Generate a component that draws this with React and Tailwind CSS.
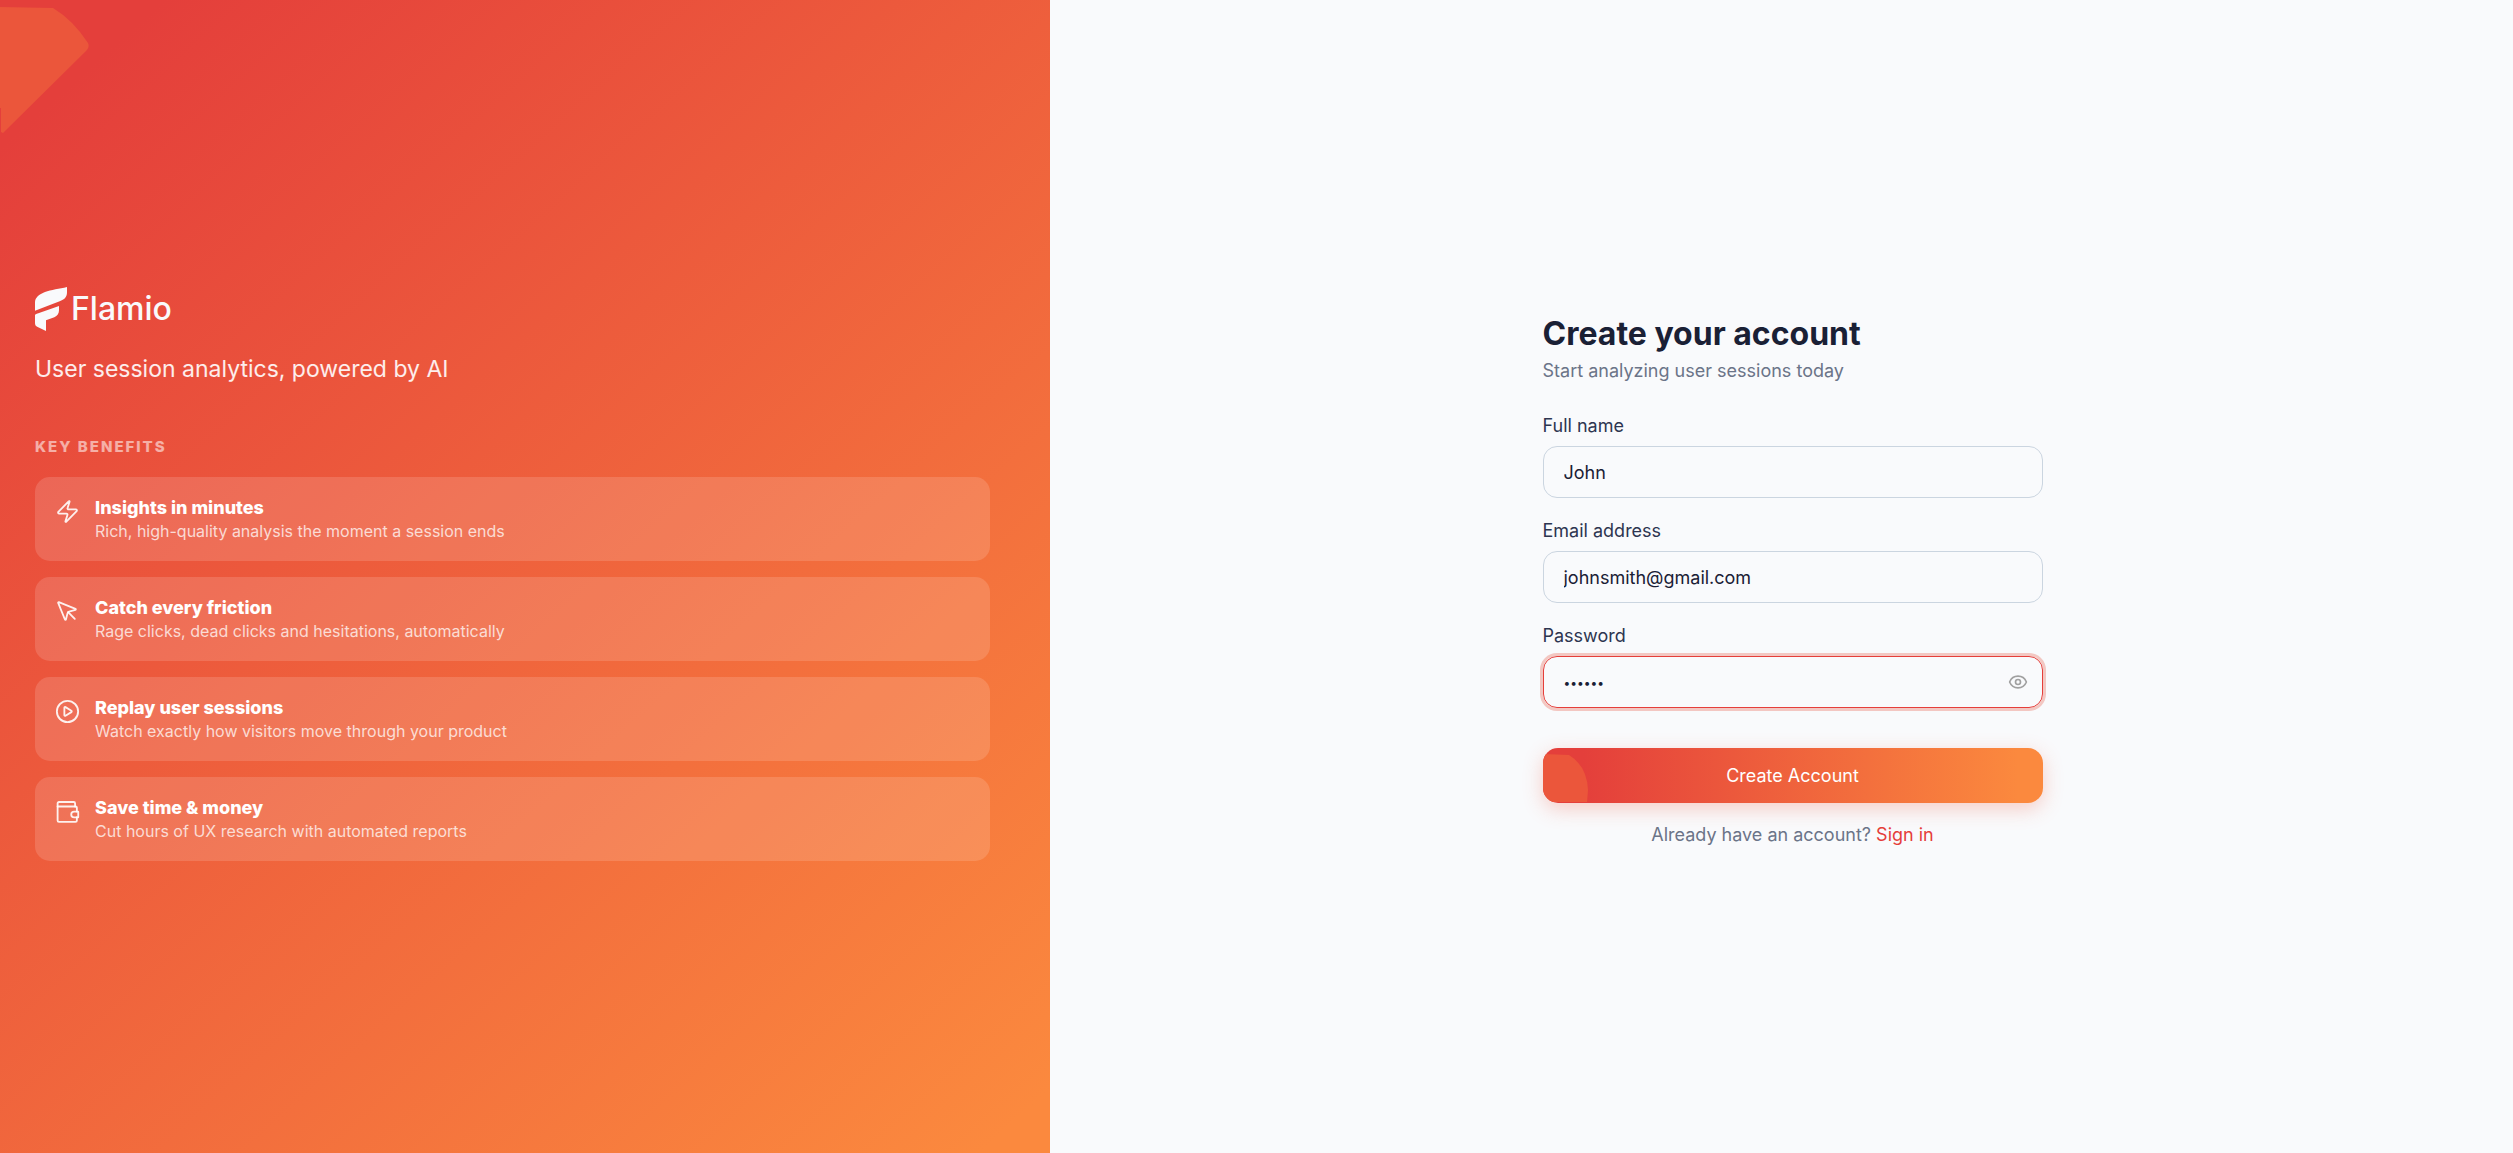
import React, { useState } from 'react'
import { Zap, MousePointer, Eye } from 'lucide-react'

const PlayIcon = ({ className }) => (
  <svg className={className} viewBox="0 0 24 24" fill="none" stroke="currentColor" strokeWidth="1.75" strokeLinejoin="round" aria-hidden="true">
    <circle cx="12" cy="12" r="10.2" />
    <path d="M9 8.4c0-.6.6-.9 1.1-.6l5.6 3.5c.5.3.5 1 0 1.3l-5.6 3.5c-.5.3-1.1 0-1.1-.6z" />
  </svg>
)

const WalletIcon = ({ className }) => (
  <svg className={className} viewBox="0 0 24 24" fill="none" stroke="currentColor" strokeWidth="1.75" strokeLinecap="round" strokeLinejoin="round" aria-hidden="true">
    <path d="M21 12V8.5a1.3 1.3 0 0 0-1.3-1.3H2.5V20.6a1.3 1.3 0 0 0 1.3 1.3h15.9a1.3 1.3 0 0 0 1.3-1.3V17.5" />
    <path d="M2.5 7.2V4.2A1.3 1.3 0 0 1 3.8 2.9H18a1.3 1.3 0 0 1 1.3 1.3v3" />
    <path d="M22.3 12.2h-4a2.7 2.7 0 0 0 0 5.4h4z" />
  </svg>
)

const benefits = [
  { icon: Zap, title: 'Insights in minutes', text: 'Rich, high-quality analysis the moment a session ends' },
  { icon: MousePointer, title: 'Catch every friction', text: 'Rage clicks, dead clicks and hesitations, automatically' },
  { icon: PlayIcon, title: 'Replay user sessions', text: 'Watch exactly how visitors move through your product' },
  { icon: WalletIcon, title: 'Save time & money', text: 'Cut hours of UX research with automated reports' }
]

const Logo = () => (
  <div className="flex items-center gap-1 text-[#f9fafc]">
    <svg className="w-8 h-11" viewBox="0 0 96 132" fill="currentColor" aria-hidden="true">
      <path d="M0 71V46C0 32 12 22 30 15C48 8 74 6 96 0V16C96 30 88 38 74 43Z" />
      <path d="M0 83C4 81 7 80 10 79L72 57V70C72 80 67 87 58 91L33 100V132L8 120C2 117 0 114 0 108Z" />
    </svg>
    <span className="text-[32px] leading-10 font-medium">Flamio</span>
  </div>
)

const Field = ({ id, label, children, ...props }) => (
  <div>
    <label htmlFor={id} className="block mb-2 text-lg leading-6 text-[#2d3550]">{label}</label>
    <div className="relative">
      <input
        id={id}
        className="block w-full h-[52px] px-5 rounded-[14px] border border-[#cbd5e0] bg-transparent text-lg text-[#1a2035] outline-none"
        {...props}
      />
      {children}
    </div>
  </div>
)

const BenefitsPanel = () => (
  <section className="relative overflow-hidden flex flex-col justify-center pl-[35px] pr-[60px] pb-1.5 bg-[linear-gradient(138deg,#e43f3b_7%,#fb893e_97%)]">
    <svg className="absolute left-0 top-0 w-[90px] h-[134px]" viewBox="0 0 90 134" aria-hidden="true">
      <path d="M0 7L53 8Q73 20 88 43Q90 47 86 51L3 133L1 132V108H0Z" fill="#eb563b" />
    </svg>
    <Logo />
    <p className="mt-5 text-[23px] leading-9 text-white/90">User session analytics, powered by AI</p>
    <h2 className="mt-12 text-[15px] leading-6 font-extrabold tracking-[2px] text-white/55">KEY BENEFITS</h2>
    <ul className="mt-[18px] flex flex-col gap-4">
      {benefits.map(({ icon: Icon, title, text }) => (
        <li key={title} className="flex items-start gap-[15px] pl-5 py-[19px] rounded-[15px] bg-white/14">
          <Icon className="shrink-0 w-[25px] h-[25px] mt-[3px] text-white/90" strokeWidth={1.75} />
          <div>
            <h3 className="text-lg leading-6 font-extrabold text-white">{title}</h3>
            <p className="text-base leading-[22px] text-white/75">{text}</p>
          </div>
        </li>
      ))}
    </ul>
  </section>
)

const SignUpForm = () => {
  const [showPassword, setShowPassword] = useState(false)

  return (
    <form className="w-full max-w-[500px]" onSubmit={(e) => e.preventDefault()}>
      <h1 className="text-[32px] leading-10 font-bold text-[#1a2035]">Create your account</h1>
      <p className="mt-[5px] text-lg leading-6 text-[#6b7488]">Start analyzing user sessions today</p>

      <div className="mt-[31px] flex flex-col gap-[21px]">
        <Field id="name" label="Full name" type="text" defaultValue="John" />
        <Field id="email" label="Email address" type="email" defaultValue="johnsmith@gmail.com" />
        <Field
          id="password"
          label="Password"
          type={showPassword ? 'text' : 'password'}
          defaultValue="secret"
          className="block w-full h-[52px] pl-5 pr-12 rounded-[14px] border border-[#e53e3a] ring-3 ring-[#e5533b]/30 bg-transparent text-xs text-[#1a2035] outline-none"
        >
          <button
            type="button"
            aria-label="Show password"
            onClick={() => setShowPassword(!showPassword)}
            className="absolute right-[15px] top-4 text-[#a0a0a0]"
          >
            <Eye className="w-5 h-5" strokeWidth={2} />
          </button>
        </Field>
      </div>

      <button
        type="submit"
        className="relative overflow-hidden mt-10 w-full h-[55px] rounded-[15px] bg-[linear-gradient(90deg,#e43f3b_8%,#fb893e_95%)] shadow-[0_6px_20px_rgba(240,90,60,0.28)] text-lg text-white"
      >
        <svg className="absolute left-0 top-0 w-[47px] h-[55px]" viewBox="0 0 47 55" aria-hidden="true">
          <path d="M0 6L26 7Q44 18 45 42L44 54H0Z" fill="#eb563b" />
        </svg>
        <span className="relative">Create Account</span>
      </button>

      <p className="mt-5 text-center text-lg leading-6 text-[#6b7488]">
        Already have an account? <a href="#signin" className="text-[#e53e3a]">Sign in</a>
      </p>
    </form>
  )
}

export default function App() {
  return (
    <div className="grid grid-cols-[1050fr_1463fr] min-h-screen bg-[#f9fafc] font-['Inter',sans-serif]">
      <BenefitsPanel />
      <main className="flex items-center justify-center pt-2 pl-[22px]">
        <SignUpForm />
      </main>
    </div>
  )
}
